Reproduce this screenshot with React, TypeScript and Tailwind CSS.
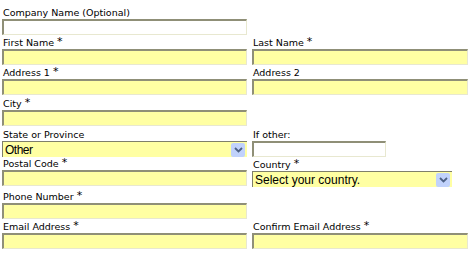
import React from "react";

const font = { fontFamily: '"DejaVu Sans", Verdana, sans-serif' };

function Label({ text, req }: { text: string; req?: boolean }) {
  return (
    <div className="h-[14px] pt-[2px] text-[9.5px] leading-[12px] text-black whitespace-nowrap pl-px" style={font}>
      {text}
      {req && <span className="ml-[3px] text-[11px] relative -top-[1px]">*</span>}
    </div>
  );
}

function Input({ white, w }: { white?: boolean; w?: string }) {
  return (
    <div
      className={`h-[16px] border-t-2 border-l-2 border-t-[#8f8f77] border-l-[#8f8f77] border-b border-r border-b-[#e8e8d0] border-r-[#e8e8d0] ${
        white ? "bg-white" : "bg-[#ffffa3]"
      } ${w ?? "w-full"}`}
    />
  );
}

function Select({ value, w, condensed }: { value: string; w?: string; condensed?: boolean }) {
  return (
    <div
      className={`h-[16px] flex items-center border-t border-l border-t-[#7f7f6a] border-l-[#7f7f6a] bg-[#ffffa3] ${w ?? "w-full"}`}
    >
      <span
        className={`flex-1 pl-[2px] text-[12px] leading-[14px] text-black ${condensed ? "tracking-[-0.5px]" : ""}`}
        style={{ fontFamily: condensed ? '"Liberation Sans Narrow", "Liberation Sans", Arial, sans-serif' : '"Liberation Sans", Arial, sans-serif' }}
      >
        {value}
      </span>
      <span className="w-[14px] h-[14px] mr-[2px] bg-[#c1d2fb] rounded-[2px] flex items-center justify-center">
        <svg width="9" height="6" viewBox="0 0 9 6">
          <path d="M1 1 L4.5 4.5 L8 1" stroke="#4d6185" strokeWidth="1.8" fill="none" />
        </svg>
      </span>
    </div>
  );
}

export default function App() {
  return (
    <div className="w-[468px] h-[260px] bg-white overflow-hidden pt-[5px] pl-[2px]">
      <div className="grid grid-cols-[245px_1fr] gap-x-[5px] gap-y-[0px]">
        <div className="h-[30px]">
          <Label text="Company Name (Optional)" />
          <Input white />
        </div>
        <div />

        <div className="h-[30px]">
          <Label text="First Name" req />
          <Input />
        </div>
        <div className="h-[30px]">
          <Label text="Last Name" req />
          <Input />
        </div>

        <div className="h-[30px]">
          <Label text="Address 1" req />
          <Input />
        </div>
        <div className="h-[30px]">
          <Label text="Address 2" />
          <Input />
        </div>

        <div className="h-[31px] pt-[1px]">
          <Label text="City" req />
          <Input />
        </div>
        <div />

        <div className="h-[30px] pt-[1px]">
          <Label text="State or Province" />
          <Select value="Other" condensed />
        </div>
        <div className="h-[30px] pt-[1px]">
          <Label text="If other:" />
          <Input white w="w-[134px]" />
        </div>

        <div className="h-[31px]">
          <Label text="Postal Code" req />
          <Input />
        </div>
        <div className="h-[31px] pt-[1px]">
          <Label text="Country" req />
          <Select value="Select your country." w="w-[200px]" />
        </div>

        <div className="h-[30px] pt-[2px]">
          <Label text="Phone Number" req />
          <Input />
        </div>
        <div />

        <div className="h-[30px] pt-[2px]">
          <Label text="Email Address" req />
          <Input />
        </div>
        <div className="h-[30px] pt-[2px]">
          <Label text="Confirm Email Address" req />
          <Input />
        </div>
      </div>
    </div>
  );
}
